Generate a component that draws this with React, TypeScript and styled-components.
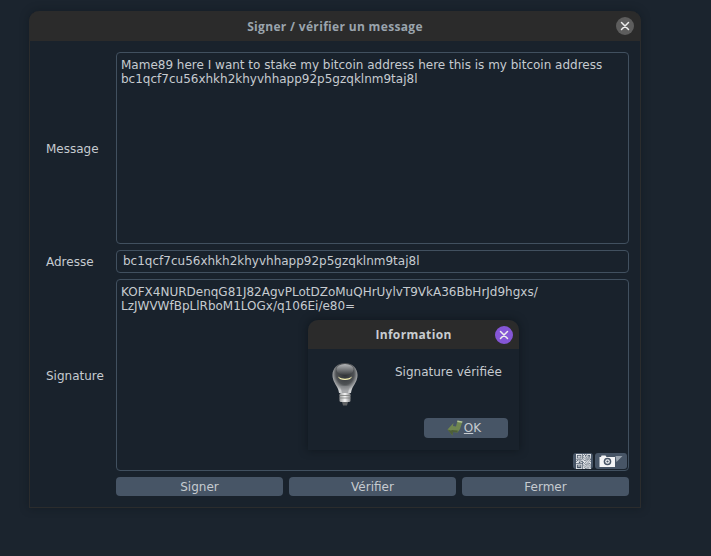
import React from "react";
import styled, { createGlobalStyle } from "styled-components";

const GlobalStyle = createGlobalStyle`
  html, body {
    margin: 0;
    padding: 0;
    background: #1b242e;
  }
  #root {
    width: 711px;
    height: 556px;
    overflow: hidden;
  }
`;

const Page = styled.div`
  position: relative;
  box-sizing: border-box;
  width: 711px;
  height: 556px;
  padding: 11px 70px 48px 29px;
  background: #1b242e;
  font-family: "DejaVu Sans", sans-serif;
  font-size: 12px;
  color: #c6cbd0;
`;

const Window = styled.div`
  box-sizing: border-box;
  width: 612px;
  height: 497px;
  display: flex;
  flex-direction: column;
  background: #19222c;
  border: 1px solid #2b2c2d;
  border-top: none;
  border-radius: 10px 10px 0 0;
  box-shadow: 0 0 10px rgba(10, 15, 20, 0.35);
`;

const TitleBar = styled.div<{ $height: number }>`
  position: relative;
  flex: none;
  height: ${(p) => p.$height}px;
  margin: 0 -1px;
  display: flex;
  align-items: center;
  justify-content: center;
  background: #2b2b2b;
  border-radius: 10px 10px 0 0;
`;

const DialogTitleBar = styled(TitleBar)`
  margin: 0;
`;

const Title = styled.span<{ $color: string }>`
  font-family: "Open Sans", sans-serif;
  font-size: 12px;
  font-weight: 700;
  letter-spacing: 0.33px;
  color: ${(p) => p.$color};
`;

const CloseButton = styled.div<{ $bg: string; $right: number }>`
  position: absolute;
  top: 50%;
  right: ${(p) => p.$right}px;
  width: 18px;
  height: 18px;
  margin-top: -9px;
  display: flex;
  align-items: center;
  justify-content: center;
  border-radius: 50%;
  background: ${(p) => p.$bg};
`;

const Form = styled.div`
  flex: 1;
  display: grid;
  grid-template-columns: 70px 513px;
  grid-template-rows: 192px 23px 192px 20px;
  row-gap: 6px;
  padding: 11px 11px 10px 16px;
`;

const Label = styled.div<{ $nudge?: number }>`
  align-self: center;
  padding-top: ${(p) => p.$nudge ?? 0}px;
  line-height: 16px;
`;

const TextBox = styled.div`
  position: relative;
  box-sizing: border-box;
  padding: 5px 4px;
  line-height: 14px;
  background: #19222c;
  border: 1px solid #41505f;
  border-radius: 4px;
  white-space: pre;
`;

const LineInput = styled.div`
  box-sizing: border-box;
  padding: 0 6px;
  line-height: 21px;
  background: #19222c;
  border: 1px solid #41505f;
  border-radius: 4px;
  white-space: pre;
`;

const CornerTools = styled.div`
  position: absolute;
  right: 1px;
  bottom: 1px;
  display: flex;
  gap: 2px;
`;

const ToolButton = styled.div<{ $width: number }>`
  width: ${(p) => p.$width}px;
  height: 16px;
  display: flex;
  align-items: center;
  justify-content: center;
  background: #475566;
  border-radius: 3px;
`;

const ButtonRow = styled.div`
  grid-column: 2;
  display: grid;
  grid-template-columns: repeat(3, 1fr);
  column-gap: 6px;
`;

const Button = styled.div`
  height: 19px;
  line-height: 21px;
  text-align: center;
  background: #475566;
  border-radius: 4px;
`;

const Dialog = styled.div`
  position: absolute;
  left: 308px;
  top: 320px;
  width: 211px;
  height: 130px;
  display: flex;
  flex-direction: column;
  background: #19222c;
  border-radius: 9px 9px 0 0;
  box-shadow: 0 0 9px rgba(8, 12, 16, 0.55);
`;

const DialogBody = styled.div`
  flex: 1;
  display: grid;
  grid-template-columns: 87px 1fr;
  grid-template-rows: 1fr 20px;
  padding: 13px 11px 12px 0;
`;

const BulbSlot = styled.div`
  padding-left: 23px;
`;

const Message = styled.div`
  padding-top: 1px;
  line-height: 18px;
`;

const DialogButton = styled.div`
  grid-column: 2;
  justify-self: end;
  box-sizing: border-box;
  width: 84px;
  height: 20px;
  padding-right: 4px;
  display: flex;
  align-items: center;
  justify-content: center;
  gap: 1px;
  background: #475566;
  border-radius: 4px;
  line-height: 22px;
`;

const Mnemonic = styled.span`
  text-decoration: underline;
`;

const CloseIcon = () => (
  <svg width="10" height="10" viewBox="0 0 10 10">
    <path d="M1.5 1.5 8.5 8.5M8.5 1.5 1.5 8.5" stroke="#eeeeee" strokeWidth="1.5" strokeLinecap="round" />
  </svg>
);

const BulbIcon = () => (
  <svg width="28" height="46" viewBox="0 0 28 46">
    <defs>
      <radialGradient id="glass" cx="50%" cy="36%" r="58%">
        <stop offset="0" stopColor="#2c2f33" />
        <stop offset="0.62" stopColor="#4f5255" />
        <stop offset="1" stopColor="#d0d2d3" />
      </radialGradient>
      <linearGradient id="dome" x1="0" x2="0" y1="0" y2="1">
        <stop offset="0" stopColor="#b4b6b8" />
        <stop offset="1" stopColor="#3a3d40" />
      </linearGradient>
      <linearGradient id="cap" x1="0" x2="1" y1="0" y2="0">
        <stop offset="0" stopColor="#9a9c9d" />
        <stop offset="0.5" stopColor="#f6f6f6" />
        <stop offset="1" stopColor="#85878a" />
      </linearGradient>
    </defs>
    <path d="M14 1C6.500 1 1.500 6.500 1.500 13c0 6 3.500 9.500 5.500 14 .6 1.500.8 3 1 4h12c.2-1 .4-2.500 1-4 2-4.500 5.500-8 5.500-14C26.500 6.500 21.500 1 14 1Z" fill="url(#glass)" />
    <ellipse cx="14" cy="7.500" rx="8.500" ry="5.500" fill="url(#dome)" />
    <path d="M7 14.500c2 1.800 4.500 2.200 7 2.200s5-.4 7-2.200c-.6 2.400-3.500 3.500-7 3.500s-6.400-1.100-7-3.500Z" fill="#f8f3b2" />
    <path d="M9 24c1 2.500 1.500 4.500 1.800 7h6.400c.3-2.500.8-4.500 1.800-7Z" fill="#8a8c8f" opacity="0.6" />
    <rect x="8.500" y="31" width="11" height="9" rx="1.500" fill="url(#cap)" />
    <path d="M8.500 33.500h11M8.500 36h11" stroke="#7a7c7a" strokeWidth="0.8" />
    <path d="M11 40h6l-1 3.500h-4Z" fill="#606264" />
  </svg>
);

const OkIcon = () => (
  <svg width="16" height="16" viewBox="0 0 16 16">
    <path d="M15.500 1.500 10.500 0.500 9 6.500 6 6 6.500 3 0.500 9.500 5.500 15.500 6 12 10.500 12.500 13 9Z" fill="#6f8650" />
    <path d="M10.500 0.500 15.500 1.500 15.100 2.800 10.200 2Z" fill="#b4c49a" />
    <path d="M0.500 9.500 5.500 15.500 6 12 10.500 12.500 10.800 10.500 5 10 4 10.500Z" fill="#4d5e38" />
  </svg>
);

const QR_ROWS = [
  "11111110101011111",
  "10000010010010001",
  "10111010110110101",
  "10111010011010001",
  "10000010101011111",
  "11111110110100000",
  "00000001011010110",
  "10110111100101101",
  "01101000111011010",
  "11100110010110111",
  "00000000101101001",
  "11111110110010110",
  "10000010011101011",
  "10111010101011100",
  "10000010110110111",
  "10000010101101010",
  "11111110110010111",
];

const QrIcon = () => (
  <svg width="15" height="15" viewBox="0 0 17 17">
    {QR_ROWS.map((row, y) =>
      row.split("").map((cell, x) =>
        cell === "1" ? <rect key={`${x}-${y}`} x={x} y={y} width="1.15" height="1.15" fill="#f2f4f6" /> : null,
      ),
    )}
  </svg>
);

const CameraIcon = () => (
  <svg width="24" height="12" viewBox="0 0 24 12">
    <path d="M0.500 2h1.500l.5-1.500h4l1 1.500h8.500v10H0.500Z" fill="#f4f5f6" />
    <circle cx="8.500" cy="6.500" r="3.800" fill="#475566" />
    <circle cx="8.500" cy="6.500" r="2.300" fill="#f4f5f6" />
    <circle cx="8.500" cy="6.500" r="1.100" fill="#475566" />
    <path d="M16.500 1h7l-6 6Z" fill="#9aa4af" />
  </svg>
);

const App: React.FC = () => {
  return (
    <Page>
      <GlobalStyle />
      <Window>
        <TitleBar $height={30}>
          <Title $color="#9aa4ad">Signer / vérifier un message</Title>
          <CloseButton $bg="#5d5d5d" $right={7}>
            <CloseIcon />
          </CloseButton>
        </TitleBar>
        <Form>
          <Label $nudge={2}>Message</Label>
          <TextBox>
            {"Mame89 here I want to stake my bitcoin address here this is my bitcoin address\nbc1qcf7cu56xhkh2khyvhhapp92p5gzqklnm9taj8l"}
          </TextBox>
          <Label>Adresse</Label>
          <LineInput>bc1qcf7cu56xhkh2khyvhhapp92p5gzqklnm9taj8l</LineInput>
          <Label $nudge={2}>Signature</Label>
          <TextBox>
            {"KOFX4NURDenqG81J82AgvPLotDZoMuQHrUylvT9VkA36BbHrJd9hgxs/\nLzJWVWfBpLlRboM1LOGx/q106Ei/e80="}
            <CornerTools>
              <ToolButton $width={20}>
                <QrIcon />
              </ToolButton>
              <ToolButton $width={32}>
                <CameraIcon />
              </ToolButton>
            </CornerTools>
          </TextBox>
          <ButtonRow>
            <Button>Signer</Button>
            <Button>Vérifier</Button>
            <Button>Fermer</Button>
          </ButtonRow>
        </Form>
      </Window>
      <Dialog>
        <DialogTitleBar $height={29}>
          <Title $color="#c9cdd1">Information</Title>
          <CloseButton $bg="#8556d6" $right={6}>
            <CloseIcon />
          </CloseButton>
        </DialogTitleBar>
        <DialogBody>
          <BulbSlot>
            <BulbIcon />
          </BulbSlot>
          <Message>Signature vérifiée</Message>
          <DialogButton>
            <OkIcon />
            <span>
              <Mnemonic>O</Mnemonic>K
            </span>
          </DialogButton>
        </DialogBody>
      </Dialog>
    </Page>
  );
};

export default App;
